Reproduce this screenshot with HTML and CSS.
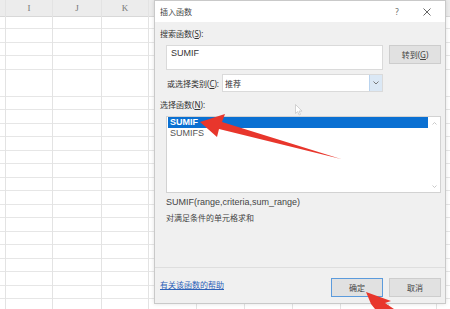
FILE: index.html
```html
<!DOCTYPE html>
<html lang="zh-CN">

<head>
    <meta charset="UTF-8">
    <title>插入函数</title>
    <link rel="stylesheet" href="styles.css">
</head>

<body>
    <div class="sheet">
        <div class="col stub"><div class="head"></div></div>
        <div class="col c-i"><div class="head">I</div></div>
        <div class="col c-j"><div class="head">J</div></div>
        <div class="col c-k"><div class="head">K</div></div>
        <!-- columns under the dialog, labels hidden by it -->
        <div class="col c-l"><div class="head"></div></div>
        <div class="col c-l"><div class="head"></div></div>
        <div class="col c-l"><div class="head"></div></div>
        <div class="col c-l"><div class="head"></div></div>
        <div class="col c-l"><div class="head"></div></div>
        <div class="col c-l"><div class="head"></div></div>
        <div class="col fill"><div class="head"></div></div>
    </div>

    <div class="dialog">
        <div class="title-bar">
            <span class="title">插入函数</span>
            <div class="controls">
                <span class="ctrl">?</span>
                <span class="ctrl">
                    <svg width="8" height="8" viewBox="0 0 8 8">
                        <path d="M0.5 0.5 L7.5 7.5 M7.5 0.5 L0.5 7.5" stroke="#555" stroke-width="0.9" fill="none"/>
                    </svg>
                </span>
            </div>
        </div>

        <div class="dialog-body">
            <div class="label first">搜索函数(<u>S</u>):</div>
            <div class="search-row">
                <div class="search-box"><span class="fn">SUMIF</span></div>
                <button class="btn">转到(<u>G</u>)</button>
            </div>

            <div class="category-row">
                <span class="category-label">或选择类别(<u>C</u>):</span>
                <div class="select">
                    <span class="select-text">推荐</span>
                    <span class="select-arrow">
                        <svg width="6" height="4" viewBox="0 0 6 4">
                            <path d="M0.5 0.5 L3 3 L5.5 0.5" stroke="#6b6b6b" stroke-width="0.9" fill="none"/>
                        </svg>
                    </span>
                </div>
            </div>

            <div class="label">选择函数(<u>N</u>):</div>
            <div class="list">
                <div class="items">
                    <div class="item selected fn">SUMIF</div>
                    <div class="item fn">SUMIFS</div>
                </div>
                <div class="scrollbar">
                    <svg width="5" height="3" viewBox="0 0 5 3">
                        <path d="M0.5 2.5 L2.5 0.5 L4.5 2.5" stroke="#bbb" stroke-width="0.8" fill="none"/>
                    </svg>
                    <svg width="5" height="3" viewBox="0 0 5 3">
                        <path d="M0.5 0.5 L2.5 2.5 L4.5 0.5" stroke="#bbb" stroke-width="0.8" fill="none"/>
                    </svg>
                </div>
            </div>

            <div class="desc">
                <div class="fn">SUMIF(range,criteria,sum_range)</div>
                <div>对满足条件的单元格求和</div>
            </div>

            <div class="spacer"></div>

            <div class="footer">
                <a class="help-link" href="#">有关该函数的帮助</a>
                <button class="btn btn-ok">确定</button>
                <button class="btn">取消</button>
            </div>
        </div>
    </div>

    <!-- mouse pointer -->
    <svg class="pointer" width="8" height="12" viewBox="0 0 8 12">
        <path d="M0.5 0.5 L0.5 9.5 L2.6 7.6 L4.2 11 L5.5 10.4 L4 7.1 L7 7.1 Z" fill="#fff" stroke="#c8c8c8" stroke-width="0.8"/>
    </svg>

    <!-- red annotation arrows -->
    <svg class="marks" width="450" height="309" viewBox="0 0 450 309">
        <path d="M200 122 L225 114 L222 122 L341 159 L219 129 L217 137 Z" fill="#e8362c"/>
        <path d="M366 292 L391 301 L385 303 L394 309 L375 309 L371 304 Z" fill="#e8362c"/>
    </svg>
</body>

</html>
```

FILE: styles.css
```css
body {
    margin: 0;
    width: 450px;
    height: 309px;
    overflow: hidden;
    position: relative;
    background-color: #fff;
    font-family: "Noto Sans", "Noto Sans CJK SC", sans-serif;
    font-size: 8px;
    color: #333;
}

/* spreadsheet behind the dialog */
.sheet {
    display: flex;
    width: 450px;
    height: 309px;
    background-image: repeating-linear-gradient(to bottom, transparent 0, transparent 12.5px, #e6e6e6 12.5px, #e6e6e6 13.5px);
    background-position: 0 16px;
}

.col {
    flex: none;
    border-right: 1px solid #e3e3e3;
}

.stub { width: 5px; }
.c-i { width: 46px; }
.c-j { width: 48px; }
.c-k { width: 46px; }
.c-l { width: 47px; }

.col.fill {
    flex: 1;
    min-width: 0;
    border-right: none;
}

.head {
    height: 16px;
    background-color: #ececec;
    border-bottom: 1px solid #d8d8d8;
    display: flex;
    align-items: center;
    justify-content: center;
    font-family: "Liberation Serif", serif;
    font-size: 9px;
    color: #777;
}

/* dialog */
.dialog {
    position: absolute;
    left: 154px;
    top: 0;
    width: 292px;
    height: 304px;
    box-sizing: border-box;
    border: 1px solid #c9c9c9;
    box-shadow: 0 0 4px rgba(0, 0, 0, 0.12);
    display: flex;
    flex-direction: column;
    background-color: #f0f0f0;
}

.title-bar {
    height: 21px;
    flex: none;
    background-color: #fff;
    display: flex;
    align-items: center;
    padding-left: 5px;
}

.title {
    color: #444;
}

.controls {
    margin-left: auto;
    display: flex;
    margin-right: 3px;
}

.ctrl {
    width: 30px;
    display: flex;
    justify-content: center;
    align-items: center;
    color: #666;
    font-size: 8px;
}

.dialog-body {
    flex: 1;
    display: flex;
    flex-direction: column;
    padding: 0 4px 0 5px;
}

.fn {
    font-family: "Liberation Sans", Arial, sans-serif;
    font-size: 9px;
}

.label {
    line-height: 12px;
    margin-top: 7px;
}

.label.first {
    margin-top: 6px;
}

u {
    text-decoration: underline;
}

.search-row {
    display: flex;
    gap: 6px;
    margin-top: 5px;
    padding-left: 6px;
}

.search-box {
    width: 217px;
    height: 25px;
    box-sizing: border-box;
    background-color: #fff;
    border: 1px solid #dadada;
    padding: 1px 4px;
    line-height: 12px;
    color: #333;
}

.btn {
    width: 52px;
    height: 19px;
    box-sizing: border-box;
    background-color: #e1e1e1;
    border: 1px solid #cdcdcd;
    font-family: inherit;
    font-size: 8px;
    color: #444;
    padding: 0;
}

.category-row {
    display: flex;
    align-items: center;
    margin-top: 4px;
    padding-left: 7px;
}

.category-label {
    width: 55px;
}

.select {
    width: 161px;
    height: 18px;
    box-sizing: border-box;
    background-color: #fff;
    border: 1px solid #dadada;
    display: flex;
    align-items: center;
}

.select-text {
    flex: 1;
    padding-left: 2px;
}

.select-arrow {
    width: 12px;
    height: 16px;
    background-color: #dbe8f5;
    border-left: 1px solid #b9d3ee;
    display: flex;
    align-items: center;
    justify-content: center;
}

.list {
    margin: 5px 0 0 6px;
    width: 275px;
    height: 77px;
    box-sizing: border-box;
    border: 1px solid #d2d2d2;
    background-color: #fff;
    display: flex;
}

.items {
    flex: 1;
    padding-left: 1px;
}

.item {
    line-height: 11px;
    padding-left: 2px;
    color: #555;
}

.item.selected {
    background-color: #0a70d2;
    color: #fff;
    font-weight: bold;
}

.scrollbar {
    width: 12px;
    display: flex;
    flex-direction: column;
    justify-content: space-between;
    align-items: center;
    padding: 5px 0 4px;
}

.desc {
    margin: 1px 0 0 6px;
    line-height: 16px;
    color: #444;
}

.spacer {
    flex: 1;
}

.footer {
    height: 36px;
    box-sizing: border-box;
    border-top: 1px solid #dedede;
    margin: 0 -4px 0 -5px;
    padding: 10px 4px 0 5px;
    display: flex;
    align-items: flex-start;
    gap: 6px;
}

.help-link {
    line-height: 14px;
    color: #2f62b8;
    text-decoration: underline;
    margin-right: auto;
}

.btn-ok {
    border-color: #5c9bdc;
}

.pointer {
    position: absolute;
    left: 295px;
    top: 104px;
}

.marks {
    position: absolute;
    left: 0;
    top: 0;
}
```
